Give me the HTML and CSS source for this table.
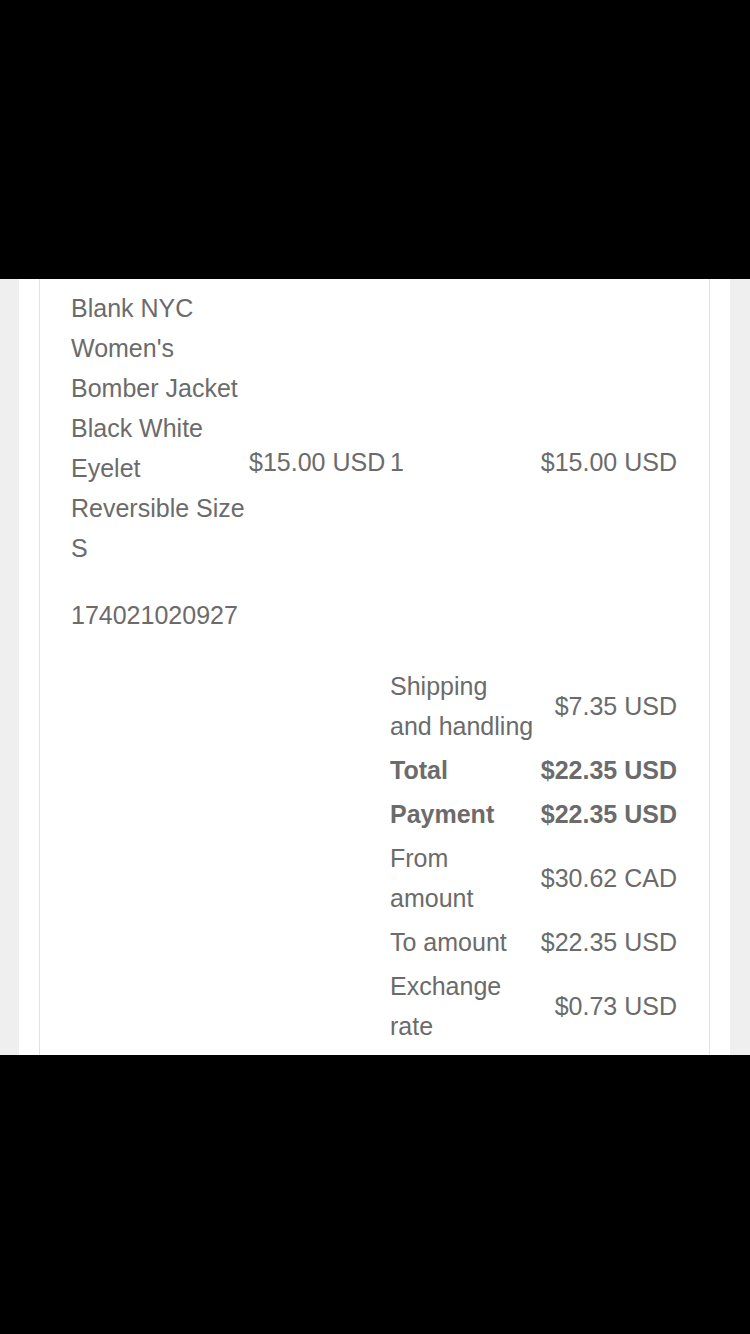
FILE: index.html
```html
<!DOCTYPE html>
<html>
<head>
<meta charset="utf-8">
<link rel="stylesheet" href="styles.css">
</head>
<body>
<div class="bar"></div>
<div class="viewport">
  <div class="sheet">
    <div class="box">
      <table class="items">
        <colgroup>
          <col class="c1"><col class="c2"><col class="c3"><col class="c4">
        </colgroup>
        <tr class="item">
          <td class="name">
            <div>Blank NYC Women's Bomber Jacket Black White Eyelet Reversible Size S</div>
            <div class="num">174021020927</div>
          </td>
          <td>$15.00 USD</td>
          <td>1</td>
          <td class="amt">$15.00 USD</td>
        </tr>
        <tr class="first"><td></td><td></td><td>Shipping and handling</td><td class="amt">$7.35 USD</td></tr>
        <tr class="bold"><td></td><td></td><td>Total</td><td class="amt">$22.35 USD</td></tr>
        <tr class="bold"><td></td><td></td><td>Payment</td><td class="amt">$22.35 USD</td></tr>
        <tr><td></td><td></td><td>From amount</td><td class="amt">$30.62 CAD</td></tr>
        <tr><td></td><td></td><td>To amount</td><td class="amt">$22.35 USD</td></tr>
        <tr><td></td><td></td><td>Exchange rate</td><td class="amt">$0.73 USD</td></tr>
      </table>
    </div>
  </div>
</div>
<div class="bar"></div>
</body>
</html>
```
FILE: styles.css
```css
html, body {
  margin: 0;
  padding: 0;
  background: #000;
}
.bar {
  height: 279px;
  background: #000;
}
.viewport {
  height: 776px;
  overflow: hidden;
  background: #efefef;
  padding: 0 20px 0 19px;
}
.sheet {
  background: #fff;
  height: 100%;
  padding: 0 20px;
}
.box {
  height: 100%;
  border-left: 1px solid #e2e2e2;
  border-right: 1px solid #e2e2e2;
  padding: 5px 32px 0 31px;
  box-sizing: border-box;
}
.items {
  width: 614px;
  margin-left: -4px;
  border-spacing: 4px;
  table-layout: fixed;
  font-family: "Liberation Sans", Arial, sans-serif;
  font-size: 25px;
  line-height: 40px;
  color: #6b6b6b;
}
.c1 { width: 174px; }
.c2 { width: 137px; }
.c3 { width: 144px; }
.c4 { width: 139px; }
.items td {
  padding: 0;
  vertical-align: middle;
  text-align: left;
}
.items td.amt {
  text-align: right;
}
.name .num {
  margin-top: 27px;
}
.first td {
  padding-top: 27px;
}
.bold td {
  font-weight: bold;
}
```
